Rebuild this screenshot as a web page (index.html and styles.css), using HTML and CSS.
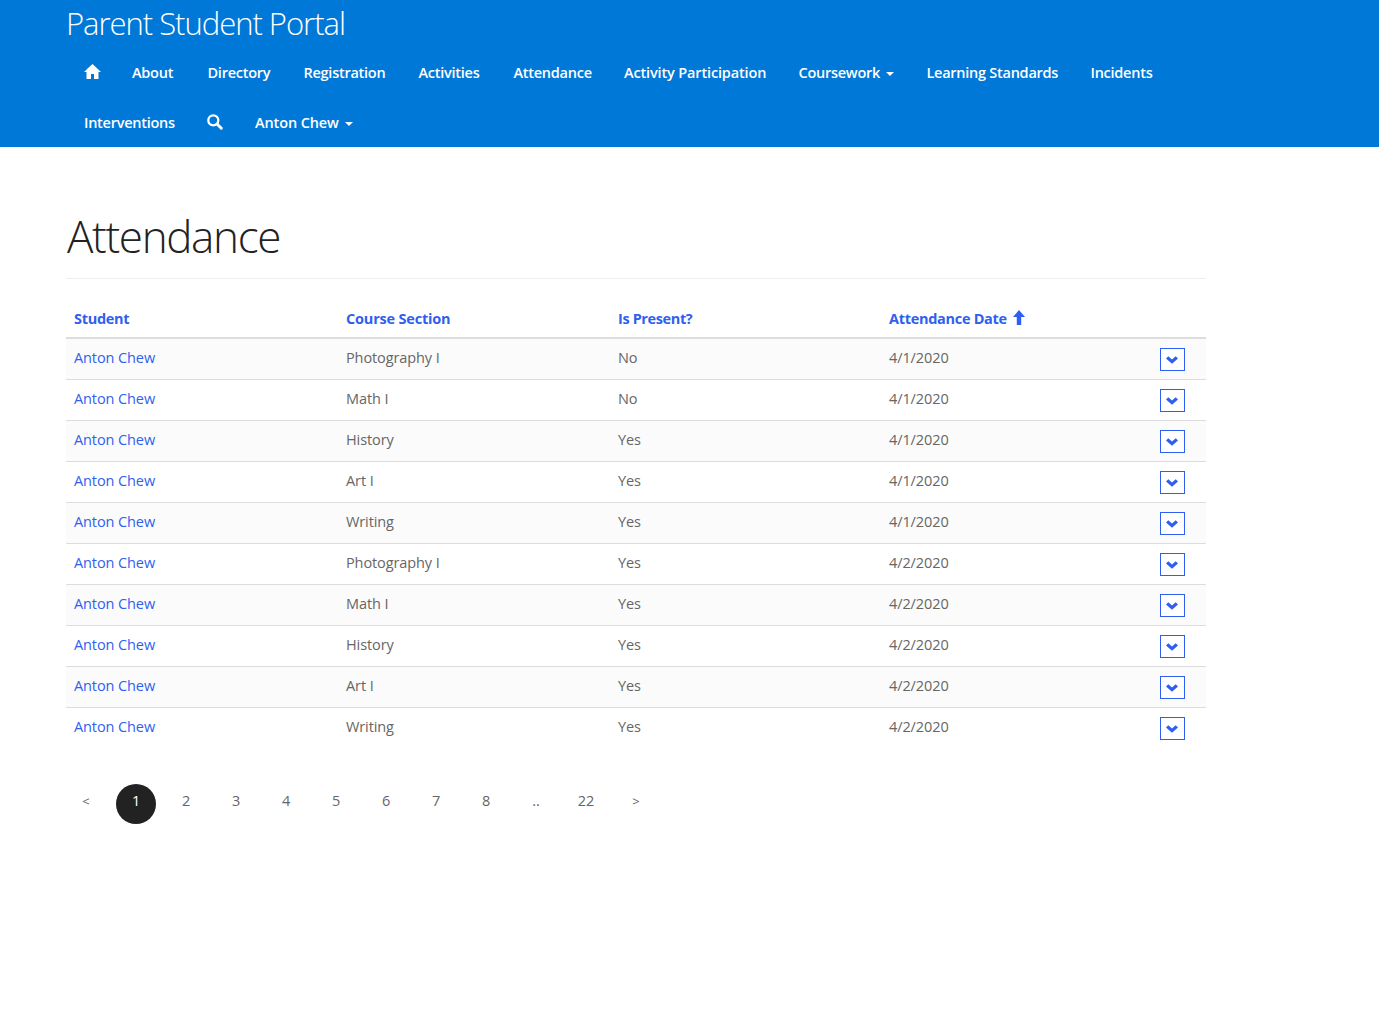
FILE: index.html
```html
<!DOCTYPE html>
<html lang="en">
<head>
<meta charset="utf-8">
<title>Attendance</title>
<link rel="stylesheet" href="styles.css">
</head>
<body>
<svg class="defs" width="0" height="0" aria-hidden="true">
  <symbol id="chevron" viewBox="0 0 12 8"><path d="M0 2.400 2.300 0.200 6 3.600 9.700 0.200 12 2.400 6 7.800Z" fill="currentColor"/></symbol>
</svg>
<header class="topbar">
  <div class="brand"><span>Parent Student Portal</span></div>
  <nav class="nav">
    <ul class="nav-row">
      <li class="w-home"><svg class="home" viewBox="0 0 17 15"><path d="M8.500 0 17 8H14.500V15H10V10H7V15H2.500V8H0L3 5.200V5Z" fill="currentColor"/></svg></li>
      <li class="w-about">About</li>
      <li class="w-directory">Directory</li>
      <li class="w-registration">Registration</li>
      <li class="w-activities">Activities</li>
      <li class="w-attendance">Attendance</li>
      <li class="w-participation">Activity Participation</li>
      <li class="w-coursework">Coursework<i class="caret"></i></li>
      <li class="w-standards">Learning Standards</li>
      <li>Incidents</li>
    </ul>
    <ul class="nav-row">
      <li class="w-interventions">Interventions</li>
      <li class="w-search"><svg class="search" viewBox="0 0 16 16"><circle cx="6.300" cy="6.300" r="5" fill="none" stroke="currentColor" stroke-width="2.300"/><path d="M10 10l4.300 4.300" stroke="currentColor" stroke-width="2.900" stroke-linecap="round"/></svg></li>
      <li class="w-user">Anton Chew<i class="caret"></i></li>
    </ul>
  </nav>
</header>
<main class="page">
  <h1>Attendance</h1>
  <table class="grid">
    <thead><tr><th class="student">Student</th><th class="course">Course Section</th><th class="present">Is Present?</th><th>Attendance Date<svg class="sort" viewBox="0 0 12 15"><path d="M6 0 12 7H8.200V15H3.800V7H0Z" fill="currentColor"/></svg></th><th class="menu"></th></tr></thead>
    <tbody>
      <tr><td><a>Anton Chew</a></td><td>Photography I</td><td>No</td><td>4/1/2020</td><td><button><svg><use href="#chevron"/></svg></button></td></tr>
      <tr><td><a>Anton Chew</a></td><td>Math I</td><td>No</td><td>4/1/2020</td><td><button><svg><use href="#chevron"/></svg></button></td></tr>
      <tr><td><a>Anton Chew</a></td><td>History</td><td>Yes</td><td>4/1/2020</td><td><button><svg><use href="#chevron"/></svg></button></td></tr>
      <tr><td><a>Anton Chew</a></td><td>Art I</td><td>Yes</td><td>4/1/2020</td><td><button><svg><use href="#chevron"/></svg></button></td></tr>
      <tr><td><a>Anton Chew</a></td><td>Writing</td><td>Yes</td><td>4/1/2020</td><td><button><svg><use href="#chevron"/></svg></button></td></tr>
      <tr><td><a>Anton Chew</a></td><td>Photography I</td><td>Yes</td><td>4/2/2020</td><td><button><svg><use href="#chevron"/></svg></button></td></tr>
      <tr><td><a>Anton Chew</a></td><td>Math I</td><td>Yes</td><td>4/2/2020</td><td><button><svg><use href="#chevron"/></svg></button></td></tr>
      <tr><td><a>Anton Chew</a></td><td>History</td><td>Yes</td><td>4/2/2020</td><td><button><svg><use href="#chevron"/></svg></button></td></tr>
      <tr><td><a>Anton Chew</a></td><td>Art I</td><td>Yes</td><td>4/2/2020</td><td><button><svg><use href="#chevron"/></svg></button></td></tr>
      <tr><td><a>Anton Chew</a></td><td>Writing</td><td>Yes</td><td>4/2/2020</td><td><button><svg><use href="#chevron"/></svg></button></td></tr>
    </tbody>
  </table>
  <ul class="pager">
    <li class="arrow">&lt;</li><li class="active">1</li><li>2</li><li>3</li><li>4</li><li>5</li><li>6</li><li>7</li><li>8</li><li>..</li><li>22</li><li class="arrow">&gt;</li>
  </ul>
</main>
</body>
</html>
```
FILE: styles.css
```css
* { box-sizing: border-box; }
body { margin: 0; background: #fff; color: #666; font: 14.5px/20px "Open Sans", "Noto Sans", sans-serif; letter-spacing: -0.1px; }
ul { list-style: none; margin: 0; padding: 0; }
.defs { display: block; height: 0; }
.topbar { height: 147px; padding-left: 66px; background: #0078d7; color: #fff; }
.brand { height: 48px; font-size: 31px; line-height: 47px; font-weight: 300; letter-spacing: -1.02px; }
.nav { padding-left: 18px; }
.nav-row { display: flex; height: 50px; align-items: center; font-weight: 600; white-space: nowrap; }
.nav-row li { flex: none; display: flex; align-items: center; letter-spacing: -0.26px; }
.w-home { width: 48px; }
.w-about { width: 75.500px; }
.w-directory { width: 96px; }
.w-registration { width: 115px; }
.w-activities { width: 95px; }
.w-attendance { width: 110.500px; }
.w-participation { width: 174.500px; }
.w-coursework { width: 128px; }
.w-standards { width: 164px; }
.w-interventions { width: 123px; }
.w-search { width: 48px; }
.nav-row .w-participation { letter-spacing: -0.15px; }
.nav-row .w-user { letter-spacing: -0.12px; }
.home { width: 17px; height: 15px; margin-top: -3px; }
.search { width: 16px; height: 16px; margin-top: -2px; }
.caret { margin: 2px 0 0 6px; border: 4px solid transparent; border-top-color: #fff; border-bottom: 0; }
.page { width: 1140px; margin-left: 66px; padding-top: 57px; }
h1 { margin: 0 0 20px; padding-left: 1px; height: 75px; border-bottom: 1px solid #eee; color: #222; font-size: 44px; line-height: 64px; font-weight: 300; letter-spacing: -1.35px; }
.grid { width: 1140px; table-layout: fixed; border-collapse: collapse; }
th { height: 39px; padding: 1px 8px 0; border-bottom: 2px solid #ddd; color: #2f5ff0; font-weight: 700; text-align: left; letter-spacing: -0.3px; }
td { height: 41px; padding: 9px 8px 8px; border-bottom: 1px solid #ddd; vertical-align: top; }
tbody tr:nth-child(odd) { background: #fbfbfb; }
tbody tr:last-child td { border-bottom: 0; }
th.student, th.course { width: 272px; }
th.present { width: 271px; }
th.course { letter-spacing: -0.2px; }
th.present { letter-spacing: -0.38px; }
th.menu { width: 54px; }
a { color: #2f5ff0; }
.sort { width: 12px; height: 15px; margin-left: 6px; vertical-align: -1px; }
button { display: flex; align-items: center; justify-content: center; width: 25px; height: 23px; margin: 0; padding: 0 1px 0 0; border: 1px solid #2f5ff0; background: #fff; color: #2f5ff0; }
button svg { width: 12px; height: 8px; }
.pager { display: flex; gap: 10px; margin-top: 35px; }
.pager li { width: 40px; height: 40px; border-radius: 50%; line-height: 34px; text-align: center; }
.pager .active { background: #222; color: #fff; }
.pager .arrow { font-size: 13px; }
```
